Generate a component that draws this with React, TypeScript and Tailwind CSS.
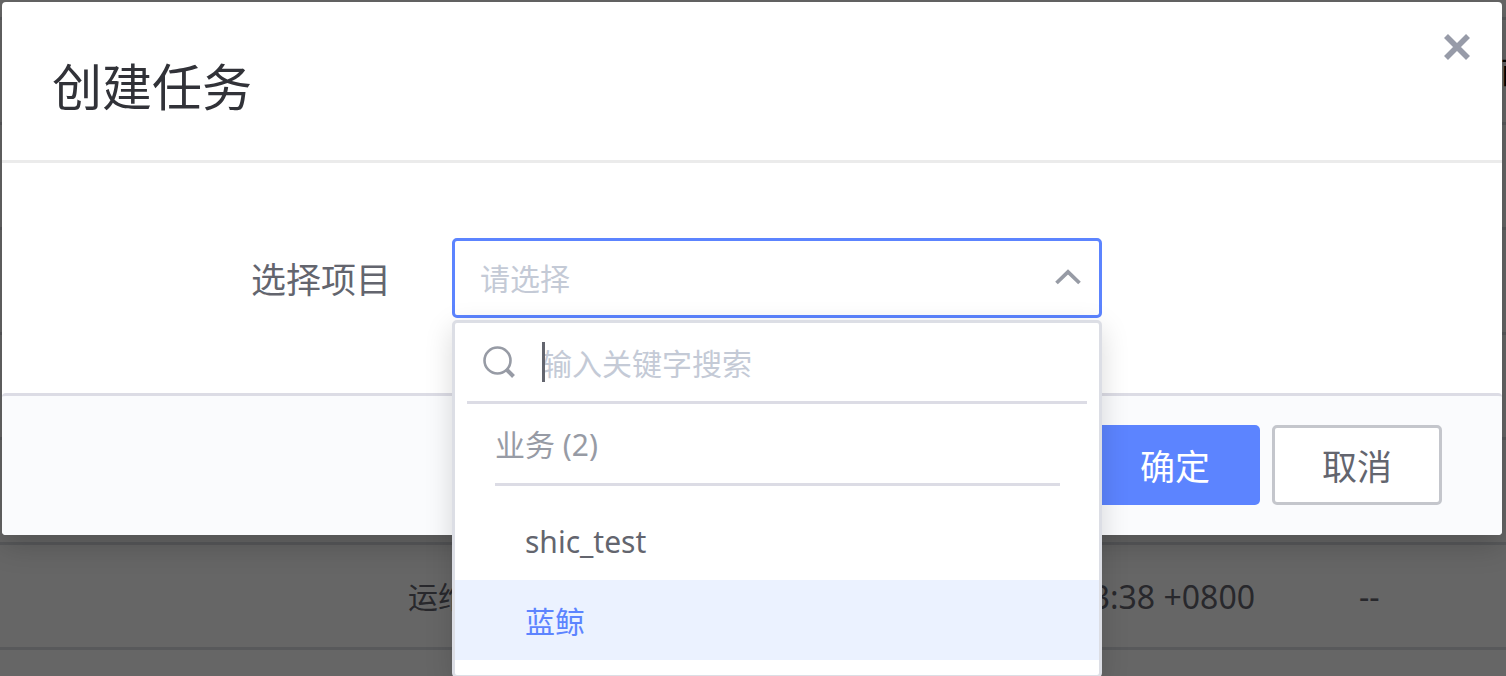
import { useState } from "react";

const projects = ["shic_test", "蓝鲸"];

type TaskRow = { name?: string; time?: string; finished?: string; extra?: string };

const rows: TaskRow[] = [
  { extra: "而" },
  {},
  {},
  {},
  {},
  { name: "运维", time: "3:38 +0800", finished: "--" },
  {},
];

function TaskTable() {
  return (
    <table className="w-full table-fixed border-collapse text-[30px] text-[#28282c]">
      <colgroup>
        <col className="w-[408px]" />
        <col />
        <col className="w-[250px]" />
        <col className="w-[246px]" />
        <col className="w-[5px]" />
      </colgroup>
      <tbody>
        <tr className="h-[18px] border-b-3 border-[#58595b]">
          <td colSpan={5} />
        </tr>
        {rows.map((row, i) => (
          <tr key={i} className="h-[105px] border-b-3 border-[#58595b]">
            <td />
            <td className="whitespace-nowrap pt-0.5">{row.name}</td>
            <td className="whitespace-nowrap pt-0.5 text-right text-[32px]">{row.time}</td>
            <td className="pt-0.5 pl-[104px] text-[32px]">{row.finished}</td>
            <td className="whitespace-nowrap pt-0.5 text-black">{row.extra}</td>
          </tr>
        ))}
      </tbody>
    </table>
  );
}

function ProjectDropdown({ active, onPick }: { active: string; onPick: (name: string) => void }) {
  return (
    <div className="absolute inset-x-0 top-full z-10 mt-0.5 rounded-[5px] border-3 border-[#dcdee5] bg-white pb-[15px] shadow-[0_8px_28px_rgba(0,0,0,0.15)]">
      <div className="mx-3 flex h-[81px] items-center border-b-3 border-[#dcdce5]">
        <svg viewBox="0 0 34 34" className="ml-[15px] size-[34px] shrink-0" fill="none" stroke="#979ba5">
          <circle cx="15.5" cy="15.5" r="13" strokeWidth="2.6" />
          <path d="M25 25l6.5 6.5" strokeWidth="4" />
        </svg>
        <div className="relative ml-[26px] flex flex-1 items-center">
          <input
            type="text"
            aria-label="搜索"
            placeholder="输入关键字搜索"
            className="w-full bg-transparent pt-0.5 text-[30px] outline-none placeholder:text-[#c4cad6]"
          />
          <span className="absolute left-0 h-10 w-[3px] bg-[#63656e]" />
        </div>
      </div>
      <div className="mr-[39px] ml-10 flex h-[82px] items-center border-b-3 border-[#dcdce5] pt-0.5 text-[30px] text-[#979ba5]">
        业务 (2)
      </div>
      <ul className="pt-[14px]">
        {projects.map((name) => (
          <li key={name}>
            <button
              type="button"
              onClick={() => onPick(name)}
              className={
                name === active
                  ? "block h-20 w-full bg-[#ebf2ff] pt-0.5 pl-[70px] text-left text-[30px] text-[#5c84ff]"
                  : "block h-20 w-full pt-0.5 pl-[70px] text-left text-[30px] text-[#63656e]"
              }
            >
              {name}
            </button>
          </li>
        ))}
      </ul>
    </div>
  );
}

export default function App() {
  const [active, setActive] = useState("蓝鲸");

  return (
    <main className="relative h-screen overflow-hidden bg-[#666] font-['Noto_Sans','Noto_Sans_CJK_SC',sans-serif]">
      <TaskTable />
      <div className="absolute inset-0 pt-0.5 pr-1 pl-0.5">
        <section
          role="dialog"
          aria-labelledby="dialog-title"
          className="relative rounded-[4px] bg-white shadow-[0_10px_30px_rgba(0,0,0,0.2)]"
        >
          <header className="flex h-[161px] items-center border-b-3 border-[#ebebeb] px-[50px] pt-3">
            <h1 id="dialog-title" className="text-[50px] text-[#313238]">
              创建任务
            </h1>
            <button type="button" aria-label="关闭" className="absolute top-8 right-8">
              <svg viewBox="0 0 26 26" className="size-[26px]" stroke="#979ba8" strokeWidth="5.6">
                <path d="M2 2l22 22M24 2L2 24" />
              </svg>
            </button>
          </header>
          <div className="flex items-center py-[75px] pr-[400px]">
            <label
              htmlFor="project"
              className="w-[450px] shrink-0 pt-1 pr-[61px] text-right text-[35px] leading-[50px] text-[#63656e]"
            >
              选择项目
            </label>
            <div className="relative h-20 min-w-0 flex-1">
              <select
                id="project"
                defaultValue=""
                className="size-full appearance-none rounded-[5px] border-3 border-[#5c84ff] bg-white pl-[25px] text-[30px] text-[#c4cad6] outline-none"
              >
                <option value="">请选择</option>
              </select>
              <svg
                viewBox="0 0 26 16"
                className="pointer-events-none absolute top-[31px] right-[21px] h-4 w-[26px]"
                fill="none"
                stroke="#979ba5"
                strokeWidth="3.8"
              >
                <path d="M1.5 14L13 3l11.5 11" />
              </svg>
              <ProjectDropdown active={active} onPick={setActive} />
            </div>
          </div>
          <footer className="flex justify-end gap-3 rounded-[4px] border-t-3 border-[#dcdce5] bg-[#fafbfd] pt-[29px] pr-[60px] pb-[30px]">
            <button
              type="button"
              className="h-20 w-[170px] rounded-[5px] bg-[#5c84ff] pt-1 text-[35px] text-white"
            >
              确定
            </button>
            <button
              type="button"
              className="h-20 w-[170px] rounded-[5px] border-3 border-[#c4c6cc] bg-white pt-1 text-[35px] text-[#63656e]"
            >
              取消
            </button>
          </footer>
        </section>
      </div>
    </main>
  );
}
